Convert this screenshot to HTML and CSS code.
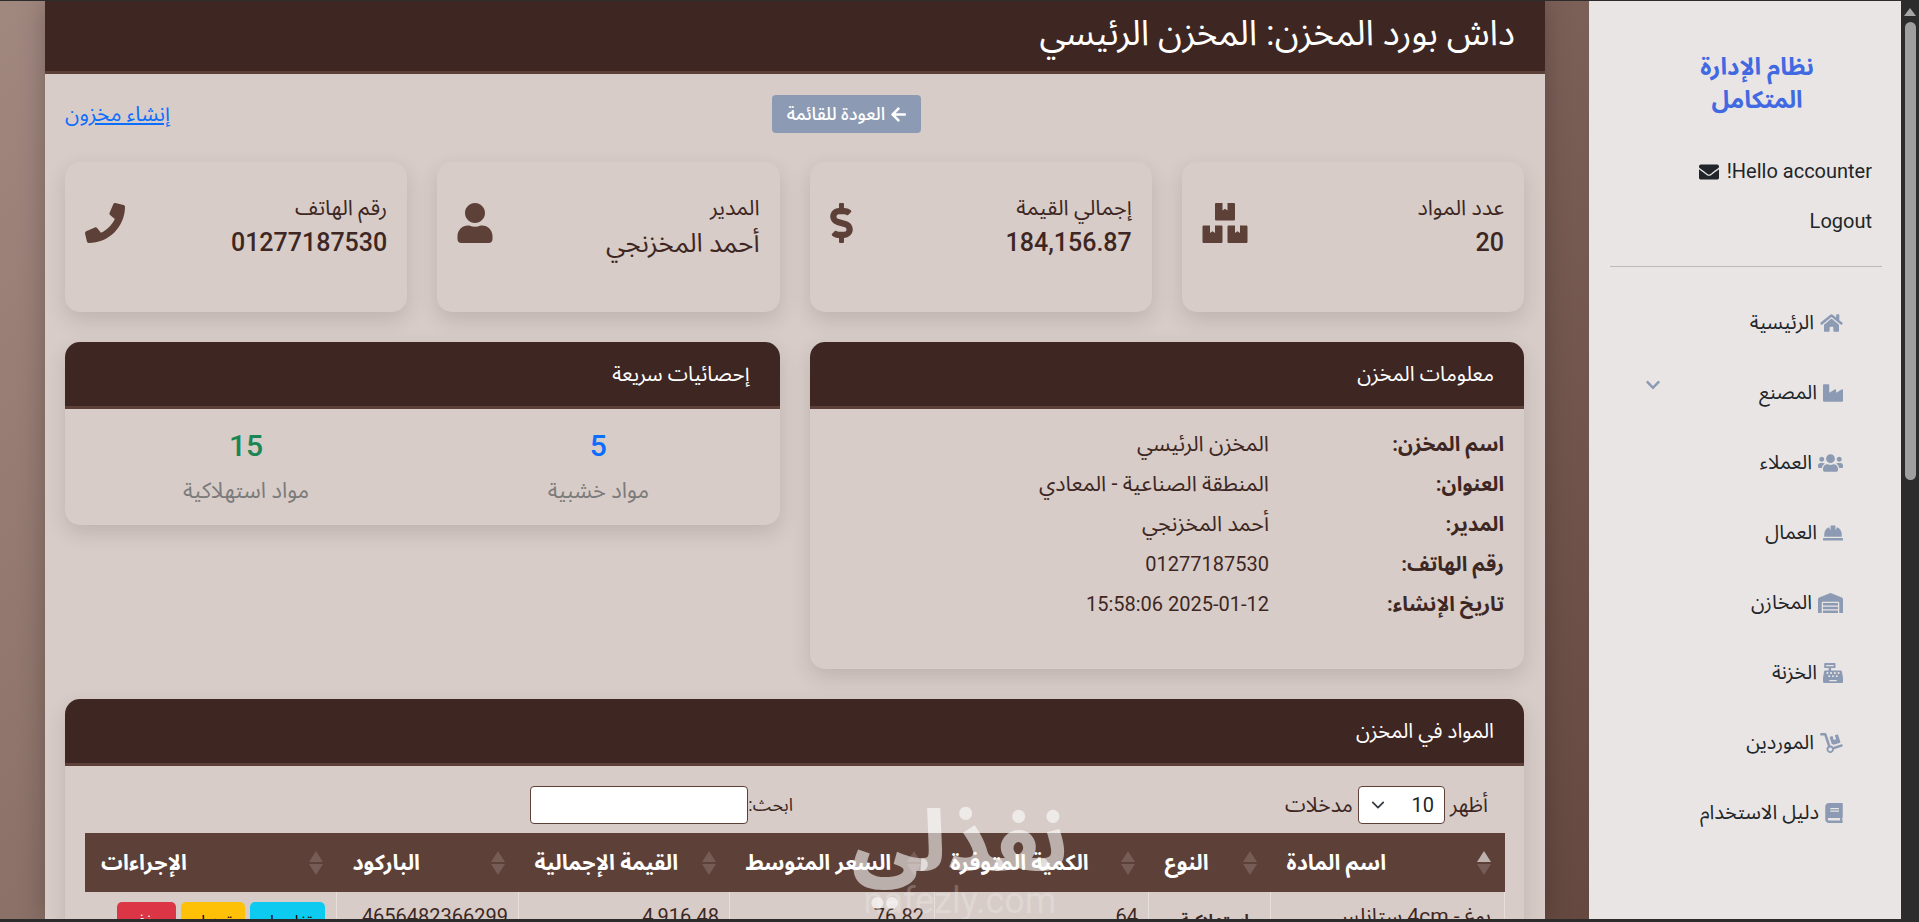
FILE: index.html
```html
<!DOCTYPE html>
<html lang="ar" dir="rtl">
<head>
<meta charset="utf-8">
<title>داش بورد المخزن</title>
<link rel="stylesheet" href="styles.css">
</head>
<body>
<svg class="sprite" aria-hidden="true">
<symbol id="i-phone" viewBox="0 0 512 512"><path d="M493.4 24.6l-104-24c-11.3-2.6-22.9 3.3-27.5 13.9l-48 112c-4.2 9.8-1.4 21.3 6.9 28l60.6 49.6c-36 76.7-98.9 140.5-177.2 177.2l-49.6-60.6c-6.8-8.3-18.2-11.1-28-6.9l-112 48C3.9 366.5-2 378.1.6 389.4l24 104C27.1 504.2 36.7 512 48 512c256.1 0 464-207.5 464-464 0-11.2-7.7-20.9-18.6-23.4z"/></symbol>
<symbol id="i-user" viewBox="0 0 448 512"><path d="M224 256c70.7 0 128-57.3 128-128S294.7 0 224 0 96 57.3 96 128s57.3 128 128 128zm89.6 32h-16.7c-22.2 10.2-46.9 16-72.9 16s-50.6-5.8-72.9-16h-16.7C60.2 288 0 348.2 0 422.4V464c0 26.5 21.5 48 48 48h352c26.5 0 48-21.5 48-48v-41.6c0-74.2-60.2-134.4-134.4-134.4z"/></symbol>
<symbol id="i-boxes" viewBox="0 0 576 512"><path d="M560 288h-80v96l-32-21.3-32 21.3v-96h-80c-8.8 0-16 7.2-16 16v192c0 8.8 7.2 16 16 16h224c8.8 0 16-7.2 16-16V304c0-8.8-7.2-16-16-16zm-384-64h224c8.8 0 16-7.2 16-16V16c0-8.8-7.2-16-16-16h-80v96l-32-21.3L256 96V0h-80c-8.8 0-16 7.2-16 16v192c0 8.8 7.2 16 16 16zm64 64h-80v96l-32-21.3L96 384v-96H16c-8.8 0-16 7.2-16 16v192c0 8.8 7.2 16 16 16h224c8.8 0 16-7.2 16-16V304c0-8.8-7.2-16-16-16z"/></symbol>
<symbol id="i-dollar" viewBox="0 0 288 512"><path d="M209.2 233.4l-108-31.6C88.7 198.2 80 186.5 80 173.5c0-16.3 13.2-29.5 29.5-29.5h66.3c12.2 0 24.2 3.7 34.2 10.5 6.1 4.1 14.3 3.1 19.5-2l34.8-34c7.1-6.9 6.1-18.4-1.8-24.5C238 74.8 207.4 64.1 176 64V16c0-8.8-7.2-16-16-16h-32c-8.8 0-16 7.2-16 16v48h-2.5C45.8 64-5.4 118.7.5 183.6c4.2 46.1 39.4 83.6 83.8 96.6l102.5 30c12.5 3.7 21.2 15.3 21.2 28.3 0 16.3-13.2 29.5-29.5 29.5h-66.3C100 368 88 364.3 78 357.5c-6.1-4.1-14.3-3.1-19.5 2l-34.8 34c-7.1 6.9-6.1 18.4 1.8 24.5 24.5 19.2 55.1 29.9 86.5 30v48c0 8.8 7.2 16 16 16h32c8.8 0 16-7.2 16-16v-48.2c46.6-.9 90.3-28.6 105.7-72.7 21.5-61.6-14.6-124.8-72.5-141.7z"/></symbol>
<symbol id="i-arrow" viewBox="0 0 448 512"><path d="M257.5 445.1l-22.2 22.2c-9.4 9.4-24.6 9.4-33.9 0L7 273c-9.4-9.4-9.4-24.6 0-33.9L201.4 44.7c9.4-9.4 24.6-9.4 33.9 0l22.2 22.2c9.5 9.5 9.3 25-.4 34.3L136.6 216H424c13.3 0 24 10.7 24 24v32c0 13.3-10.7 24-24 24H136.6l120.5 114.8c9.8 9.3 10 24.8.4 34.3z"/></symbol>
<symbol id="i-mail" viewBox="0 0 512 512"><path d="M502.3 190.8c3.9-3.1 9.7-.2 9.7 4.7V400c0 26.5-21.5 48-48 48H48c-26.5 0-48-21.5-48-48V195.6c0-5 5.7-7.8 9.7-4.7 22.4 17.4 52.1 39.5 154.1 113.6 21.1 15.4 56.7 47.8 92.2 47.6 35.7.3 72-32.8 92.3-47.6 102-74.1 131.6-96.3 154-113.7zM256 320c23.2.4 56.6-29.2 73.4-41.4 132.7-96.3 142.8-104.7 173.4-128.7 5.8-4.5 9.2-11.5 9.2-18.9v-19c0-26.5-21.5-48-48-48H48C21.5 64 0 85.5 0 112v19c0 7.4 3.4 14.3 9.2 18.9 30.6 23.9 40.7 32.4 173.4 128.7 16.8 12.2 50.2 41.8 73.4 41.4z"/></symbol>
<symbol id="i-home" viewBox="0 0 576 512"><path d="M280.37 148.26L96 300.11V464a16 16 0 0 0 16 16l112.06-.29a16 16 0 0 0 15.92-16V368a16 16 0 0 1 16-16h64a16 16 0 0 1 16 16v95.64a16 16 0 0 0 16 16.05L464 480a16 16 0 0 0 16-16V300L295.67 148.26a12.19 12.19 0 0 0-15.3 0zM571.6 251.47L488 182.56V44.05a12 12 0 0 0-12-12h-56a12 12 0 0 0-12 12v72.61L318.47 43a48 48 0 0 0-61 0L4.34 251.47a12 12 0 0 0-1.6 16.9l25.5 31A12 12 0 0 0 45.15 301l235.22-193.74a12.19 12.19 0 0 1 15.3 0L530.9 301a12 12 0 0 0 16.9-1.6l25.5-31a12 12 0 0 0-1.7-16.93z"/></symbol>
<symbol id="i-industry" viewBox="0 0 512 512"><path d="M475.115 163.781L336 252.309v-68.28c0-18.916-20.931-30.399-36.885-20.248L160 252.309V56c0-13.255-10.745-24-24-24H24C10.745 32 0 42.745 0 56v400c0 13.255 10.745 24 24 24h464c13.255 0 24-10.745 24-24V184.029c0-18.917-20.931-30.399-36.885-20.248z"/></symbol>
<symbol id="i-users" viewBox="0 0 640 512"><path d="M96 224c35.3 0 64-28.7 64-64s-28.7-64-64-64-64 28.7-64 64 28.7 64 64 64zm448 0c35.3 0 64-28.7 64-64s-28.7-64-64-64-64 28.7-64 64 28.7 64 64 64zm32 32h-64c-17.6 0-33.5 7.1-45.1 18.6 40.3 22.1 68.9 62 75.1 109.4h66c17.7 0 32-14.3 32-32v-32c0-35.3-28.7-64-64-64zm-256 0c61.9 0 112-50.1 112-112S381.9 32 320 32 208 82.1 208 144s50.1 112 112 112zm76.8 32h-8.3c-20.8 10-43.9 16-68.5 16s-47.6-6-68.5-16h-8.3C179.6 288 128 339.6 128 403.2V432c0 26.5 21.5 48 48 48h288c26.5 0 48-21.5 48-48v-28.8c0-63.6-51.6-115.2-115.2-115.2zm-223.7-13.4C161.5 263.1 145.6 256 128 256H64c-35.3 0-64 28.7-64 64v32c0 17.7 14.3 32 32 32h65.9c6.3-47.4 34.9-87.3 75.2-109.4z"/></symbol>
<symbol id="i-hat" viewBox="0 0 512 512"><path d="M480 288c0-80.25-49.28-148.92-119.19-177.62L320 192V80a16 16 0 0 0-16-16h-96a16 16 0 0 0-16 16v112l-40.81-81.62C81.28 139.08 32 207.75 32 288v64h448zm16 96H16a16 16 0 0 0-16 16v32a16 16 0 0 0 16 16h480a16 16 0 0 0 16-16v-32a16 16 0 0 0-16-16z"/></symbol>
<symbol id="i-warehouse" viewBox="0 0 640 512"><path d="M504 352H136.4c-4.4 0-8 3.6-8 8l-.1 48c0 4.4 3.6 8 8 8H504c4.4 0 8-3.6 8-8v-48c0-4.4-3.6-8-8-8zm0 96H136.1c-4.4 0-8 3.6-8 8l-.1 48c0 4.4 3.6 8 8 8h368c4.4 0 8-3.6 8-8v-48c0-4.4-3.6-8-8-8zm0-192H136.6c-4.4 0-8 3.6-8 8l-.1 48c0 4.4 3.6 8 8 8H504c4.4 0 8-3.6 8-8v-48c0-4.4-3.6-8-8-8zm106.5-139L338.4 3.7a48.15 48.15 0 0 0-36.9 0L29.5 117C11.7 124.5 0 141.9 0 161.3V504c0 4.4 3.6 8 8 8h80c4.4 0 8-3.6 8-8V256c0-17.6 14.6-32 32.6-32h382.8c18 0 32.6 14.4 32.6 32v248c0 4.4 3.6 8 8 8h80c4.4 0 8-3.6 8-8V161.3c0-19.4-11.7-36.8-29.5-44.3z"/></symbol>
<symbol id="i-cash" viewBox="0 0 512 512"><path d="M511.1 378.8l-26.7-160c-2.6-15.4-15.9-26.7-31.6-26.7H208v-64h96c8.8 0 16-7.2 16-16V16c0-8.8-7.2-16-16-16H48c-8.8 0-16 7.2-16 16v96c0 8.8 7.2 16 16 16h96v64H59.1c-15.6 0-29 11.3-31.6 26.7L.8 378.7c-.6 3.5-.9 7-.9 10.5V480c0 17.7 14.3 32 32 32h448c17.7 0 32-14.3 32-32v-90.7c.1-3.5-.2-7-.8-10.5zM280 248c0-8.8 7.2-16 16-16h16c8.8 0 16 7.2 16 16v16c0 8.8-7.2 16-16 16h-16c-8.8 0-16-7.2-16-16v-16zm-32 64h16c8.8 0 16 7.2 16 16v16c0 8.8-7.2 16-16 16h-16c-8.8 0-16-7.2-16-16v-16c0-8.8 7.2-16 16-16zm-32-80c8.8 0 16 7.2 16 16v16c0 8.8-7.2 16-16 16h-16c-8.8 0-16-7.2-16-16v-16c0-8.8 7.2-16 16-16h16zM80 80V48h192v32H80zm40 200h-16c-8.8 0-16-7.2-16-16v-16c0-8.8 7.2-16 16-16h16c8.8 0 16 7.2 16 16v16c0 8.8-7.2 16-16 16zm16 64v-16c0-8.8 7.2-16 16-16h16c8.8 0 16 7.2 16 16v16c0 8.8-7.2 16-16 16h-16c-8.8 0-16-7.2-16-16zm216 112c0 4.4-3.6 8-8 8H168c-4.4 0-8-3.6-8-8v-16c0-4.4 3.6-8 8-8h176c4.4 0 8 3.6 8 8v16zm24-112c0 8.8-7.2 16-16 16h-16c-8.8 0-16-7.2-16-16v-16c0-8.8 7.2-16 16-16h16c8.8 0 16 7.2 16 16v16zm48-80c0 8.8-7.2 16-16 16h-16c-8.8 0-16-7.2-16-16v-16c0-8.8 7.2-16 16-16h16c8.8 0 16 7.2 16 16v16z"/></symbol>
<symbol id="i-dolly" viewBox="0 0 576 512"><path d="M294.2 277.7c18 5 34.7 13.4 49.5 24.7l161.5-53.8c8.4-2.8 12.9-11.9 10.1-20.2L454.9 47.2c-2.8-8.4-11.9-12.9-20.2-10.1l-61.1 20.4 33.1 99.4L346 177l-33.1-99.4-61.6 20.5c-8.4 2.8-12.9 11.9-10.1 20.2l53 159.4zm281 48.7L565 296c-2.8-8.4-11.9-12.9-20.2-10.1l-213.5 71.2c-17.2-22-43.6-36.4-73.5-37L158.4 21.9C154 8.8 141.8 0 128 0H16C7.2 0 0 7.2 0 16v32c0 8.8 7.2 16 16 16h88.9l92.2 276.7c-26.1 20.4-41.7 53.6-36 90.5 6.1 39.4 37.9 72.3 77.3 79.2 60.2 10.7 112.3-34.8 113.4-92.6l213.3-71.2c8.3-2.8 12.9-11.8 10.1-20.2zM256 464c-26.5 0-48-21.5-48-48s21.5-48 48-48 48 21.5 48 48-21.5 48-48 48z"/></symbol>
<symbol id="i-book" viewBox="0 0 448 512"><path d="M448 360V24c0-13.3-10.7-24-24-24H96C43 0 0 43 0 96v320c0 53 43 96 96 96h328c13.3 0 24-10.7 24-24v-16c0-7.5-3.5-14.3-8.9-18.7-4.2-15.4-4.2-59.3 0-74.7 5.4-4.3 8.9-11.1 8.9-18.6zM128 134c0-3.3 2.7-6 6-6h212c3.3 0 6 2.7 6 6v20c0 3.3-2.7 6-6 6H134c-3.3 0-6-2.7-6-6v-20zm0 64c0-3.3 2.7-6 6-6h212c3.3 0 6 2.7 6 6v20c0 3.3-2.7 6-6 6H134c-3.3 0-6-2.7-6-6v-20zm253.4 250H96c-17.7 0-32-14.3-32-32 0-17.6 14.4-32 32-32h285.4c-1.9 17.1-1.9 46.9 0 64z"/></symbol>
<symbol id="i-chev" viewBox="0 0 448 512"><path d="M207.029 381.476L12.686 187.132c-9.373-9.373-9.373-24.569 0-33.941l22.667-22.667c9.357-9.357 24.522-9.375 33.901-.04L224 284.505l154.745-154.021c9.379-9.335 24.544-9.317 33.901.04l22.667 22.667c9.373 9.373 9.373 24.569 0 33.941L240.971 381.476c-9.373 9.372-24.569 9.372-33.942 0z"/></symbol>
</svg>

<div class="window">
  <div class="scrollbar"><span class="scroll-arrow"></span><span class="scroll-thumb"></span></div>

  <aside class="sidebar">
    <h2 class="brand">نظام الإدارة<br>المتكامل</h2>
    <div class="hello"><span>Hello accounter!</span><svg class="hello-icon"><use href="#i-mail"/></svg></div>
    <div class="logout">Logout</div>
    <hr class="side-rule">
    <nav class="nav">
      <a class="nav-item"><svg class="nav-icon w21"><use href="#i-home"/></svg>الرئيسية</a>
      <a class="nav-item nav-item-sub"><svg class="nav-icon w20"><use href="#i-industry"/></svg>المصنع<svg class="nav-chev"><use href="#i-chev"/></svg></a>
      <a class="nav-item"><svg class="nav-icon w25"><use href="#i-users"/></svg>العملاء</a>
      <a class="nav-item"><svg class="nav-icon w20"><use href="#i-hat"/></svg>العمال</a>
      <a class="nav-item"><svg class="nav-icon w25"><use href="#i-warehouse"/></svg>المخازن</a>
      <a class="nav-item"><svg class="nav-icon w20"><use href="#i-cash"/></svg>الخزنة</a>
      <a class="nav-item"><svg class="nav-icon w23"><use href="#i-dolly"/></svg>الموردين</a>
      <a class="nav-item"><svg class="nav-icon w18"><use href="#i-book"/></svg>دليل الاستخدام</a>
    </nav>
  </aside>

  <main class="main">
    <header class="page-head"><h1 class="page-title">داش بورد المخزن: المخزن الرئيسي</h1></header>
    <div class="page-body">
      <div class="toolbar">
        <span class="toolbar-side"></span>
        <a class="btn-back"><svg class="btn-back-icon"><use href="#i-arrow"/></svg>العودة للقائمة</a>
        <a class="create-link">إنشاء مخزون</a>
      </div>

      <section class="stat-row">
        <div class="stat-card">
          <div class="stat-text"><div class="stat-label">عدد المواد</div><div class="stat-value">20</div></div>
          <svg class="stat-icon si-boxes"><use href="#i-boxes"/></svg>
        </div>
        <div class="stat-card">
          <div class="stat-text"><div class="stat-label">إجمالي القيمة</div><div class="stat-value">184,156.87</div></div>
          <svg class="stat-icon si-dollar"><use href="#i-dollar"/></svg>
        </div>
        <div class="stat-card">
          <div class="stat-text"><div class="stat-label">المدير</div><div class="stat-value stat-value-name">أحمد المخزنجي</div></div>
          <svg class="stat-icon si-user"><use href="#i-user"/></svg>
        </div>
        <div class="stat-card">
          <div class="stat-text"><div class="stat-label">رقم الهاتف</div><div class="stat-value">01277187530</div></div>
          <svg class="stat-icon si-phone"><use href="#i-phone"/></svg>
        </div>
      </section>

      <section class="two-col">
        <div class="panel panel-info">
          <div class="panel-head">معلومات المخزن</div>
          <dl class="info-list">
            <dt>اسم المخزن:</dt><dd>المخزن الرئيسي</dd>
            <dt>العنوان:</dt><dd>المنطقة الصناعية - المعادي</dd>
            <dt>المدير:</dt><dd>أحمد المخزنجي</dd>
            <dt>رقم الهاتف:</dt><dd class="dd-num">01277187530</dd>
            <dt>تاريخ الإنشاء:</dt><dd class="dd-num">2025-01-12 15:58:06</dd>
          </dl>
        </div>
        <div class="panel panel-quick">
          <div class="panel-head">إحصائيات سريعة</div>
          <div class="quick-grid">
            <div class="quick"><div class="quick-num num-blue">5</div><div class="quick-label">مواد خشبية</div></div>
            <div class="quick"><div class="quick-num num-green">15</div><div class="quick-label">مواد استهلاكية</div></div>
          </div>
        </div>
      </section>

      <section class="panel panel-table">
        <div class="panel-head">المواد في المخزن</div>
        <div class="table-body">
          <div class="dt-controls">
            <label class="dt-length">أظهر <span class="fake-select"><span>10</span><svg class="select-chev" viewBox="0 0 16 16"><path d="M2 5l6 6 6-6" fill="none" stroke="#343a40" stroke-width="2" stroke-linecap="round" stroke-linejoin="round"/></svg></span> مدخلات</label>
            <label class="dt-search">ابحث:<span class="fake-input"></span></label>
          </div>
          <table class="dt">
            <thead>
              <tr>
                <th class="c1 sorted">اسم المادة</th>
                <th class="c2">النوع</th>
                <th class="c3">الكمية المتوفرة</th>
                <th class="c4">السعر المتوسط</th>
                <th class="c5">القيمة الإجمالية</th>
                <th class="c6">الباركود</th>
                <th class="c7">الإجراءات</th>
              </tr>
            </thead>
            <tbody>
              <tr>
                <td class="td-name">بوغ - 4cm ستانلس</td>
                <td class="td-type">استهلاكية</td>
                <td>64</td>
                <td>76.82</td>
                <td>4,916.48</td>
                <td>4656482366299</td>
                <td class="td-act"><a class="act act-info">تفاصيل</a><a class="act act-warn">تعديل</a><a class="act act-del">حذف</a></td>
              </tr>
            </tbody>
          </table>
        </div>
      </section>
    </div>
  </main>

  <div class="watermark" aria-hidden="true"><div class="wm-ar">نفذلي</div><div class="wm-en">nafezly.com</div></div>
</div>
</body>
</html>
```

FILE: styles.css
```css
* { box-sizing: border-box; }
html, body { margin: 0; height: 100%; overflow: hidden; }
body {
  background: #2c2c2c;
  font-family: Roboto, "Noto Sans Arabic", "Noto Kufi Arabic", "DejaVu Sans", sans-serif;
  color: #3e2723;
  font-size: 16px;
  padding: 1px 0 3px;
}
.sprite { display: none; }
svg { fill: currentColor; }

.window {
  position: relative;
  height: 100%;
  display: flex;
  background: linear-gradient(135deg, #a1887f 0%, #5d4037 100%);
  overflow: hidden;
}
.scrollbar {
  flex: 0 0 18px;
  background: #2c2c2c;
  display: flex;
  flex-direction: column;
  align-items: center;
  padding-top: 7px;
  gap: 6px;
}
.scroll-arrow {
  width: 0; height: 0;
  border-left: 6px solid transparent;
  border-right: 6px solid transparent;
  border-bottom: 8px solid #a6a6a6;
}
.scroll-thumb { width: 11px; height: 458px; background: #9f9f9f; border-radius: 6px; }

.sidebar {
  flex: 0 0 312px;
  background: #e9e5e4;
  padding: 0 19px 0 21px;
  color: #212529;
}
.brand {
  margin: 50px 0 0;
  color: #4169e1;
  font-size: 24px;
  font-weight: 700;
  line-height: 33px;
  text-align: center;
  padding-left: 22px;
}
.hello {
  margin-top: 41px;
  display: flex;
  justify-content: flex-start;
  align-items: center;
  gap: 8px;
  font-size: 20px;
  line-height: 27px;
  padding-right: 10px;
}
.hello-icon { width: 20px; height: 20px; }
.logout { margin-top: 23px; font-size: 20px; line-height: 27px; padding-right: 10px; }
.side-rule { margin: 31px 0 0; border: 0; border-top: 1px solid #bdb9b8; }
.nav { margin-top: 21px; }
.nav-item {
  height: 70px;
  display: flex;
  align-items: center;
  gap: 6px;
  padding-right: 39px;
  font-size: 20px;
  color: #212529;
  position: relative;
}
.nav-icon { color: #8c9bb3; height: 20px; flex: none; }
.w18 { width: 18px; } .w20 { width: 20px; } .w21 { width: 23px; } .w23 { width: 23px; } .w25 { width: 25px; }
.nav-item-sub { margin: 0; }
.nav-chev { position: absolute; left: 35px; top: 19px; width: 16px; height: 16px; color: #8c9bb3; }

.main {
  flex: 0 0 1500px;
  margin-right: 44px;
  background: #d7ccc8;
  box-shadow: 0 0 24px rgba(0,0,0,.25);
  min-width: 0;
}
.page-head {
  height: 73px;
  background: #3e2723;
  border-bottom: 3px solid #5d4037;
  padding: 0 30px;
  display: flex;
  align-items: center;
}
.page-title { margin: 0 0 6px; color: #fff; font-size: 35.5px; font-weight: 400; }

.page-body { padding: 20px 21px 0 20px; }
.toolbar { display: flex; align-items: center; justify-content: space-between; height: 40px; }
.btn-back {
  height: 38px;
  width: 149px;
  background: #8c9bb3;
  color: #fff;
  border-radius: 4px;
  display: flex;
  align-items: center;
  justify-content: center;
  gap: 5px;
  font-size: 18px;
  font-weight: 500;
}
.btn-back-icon { width: 17px; height: 17px; }
.create-link { color: #0d6efd; text-decoration: underline; font-size: 21px; }

.stat-row { display: grid; grid-template-columns: repeat(4, 1fr); gap: 30px; margin-top: 28px; }
.stat-card {
  height: 150px;
  background: #d7ccc8;
  border-radius: 15px;
  box-shadow: 0 8px 20px rgba(62,39,35,.15);
  padding: 32px 20px 0;
  display: flex;
  justify-content: space-between;
}
.stat-text { text-align: right; }
.stat-label { font-size: 21.5px; line-height: 27px; color: #3e2723; }
.stat-value { font-size: 25px; font-weight: 500; line-height: 36px; margin-top: 4px; }
.stat-value-name { font-weight: 400; font-size: 26px; }
.stat-icon { height: 40px; margin-top: 9px; color: #5d4037; flex: none; }
.si-boxes { width: 46px; } .si-dollar { width: 23px; } .si-user { width: 36px; } .si-phone { width: 40px; }

.two-col { display: grid; grid-template-columns: 1fr 1fr; gap: 30px; margin-top: 30px; align-items: start; }
.panel {
  background: #d7ccc8;
  border-radius: 15px;
  box-shadow: 0 8px 20px rgba(62,39,35,.15);
  overflow: hidden;
}
.panel-head {
  height: 67px;
  background: #3e2723;
  border-bottom: 3px solid #5d4037;
  color: #fff;
  font-size: 20.5px;
  font-weight: 400;
  padding: 0 30px;
  display: flex;
  align-items: center;
}
.panel-info { height: 327px; }
.panel-quick { height: 183px; }
.info-list {
  margin: 0;
  padding: 15px 20px 0;
  display: grid;
  grid-template-columns: 235px 1fr;
  grid-auto-rows: 40px;
  align-items: center;
  font-size: 21.5px;
}
.info-list dt { font-weight: 700; font-size: 20.5px; }
.info-list dd { margin: 0; }
.info-list .dd-num { font-size: 20px; }
.quick-grid { display: grid; grid-template-columns: 1fr 1fr; padding: 13px 5px 0; text-align: center; }
.quick-num { font-size: 30px; font-weight: 500; line-height: 48px; }
.num-blue { color: #0d6efd; }
.num-green { color: #198754; }
.quick-label { font-size: 22px; line-height: 27px; color: #7b7b7b; margin-top: 7px; }

.panel-table { margin-top: 30px; height: 300px; }
.table-body { padding: 20px 19px 0 20px; }
.dt-controls { display: grid; grid-template-columns: 1fr 1fr; height: 38px; font-size: 21px; line-height: 1; color: #3e2723; }
.dt-length, .dt-search { display: flex; align-items: center; gap: 5px; padding-right: 17px; height: 38px; }
.dt-search { padding-right: 2px; gap: 0; font-size: 18px; }
.fake-select {
  width: 87px; height: 38px; background: #fff;
  border: 1px solid #5d4037; border-radius: 4px;
  display: flex; align-items: center; justify-content: space-between;
  padding: 0 10px 0 12px;
  font-size: 20px; color: #212529;
}
.select-chev { width: 14px; height: 14px; fill: none; }
.fake-input { width: 218px; height: 38px; background: #fff; border: 1px solid #5d4037; border-radius: 4px; }

.dt { width: 100%; margin-top: 9px; border-collapse: collapse; table-layout: fixed; font-size: 20px; }
.dt th {
  height: 59px; background: #5d4037; color: #fff;
  font-size: 21.5px; font-weight: 700;
  text-align: left; padding: 0 15px 0 16px;
  position: relative;
  white-space: nowrap;
}
.dt th::before, .dt th::after {
  content: ""; position: absolute; right: 14px;
  border-left: 7px solid transparent; border-right: 7px solid transparent;
}
.dt th::before { top: 18px; border-bottom: 11px solid rgba(255,255,255,.15); }
.dt th::after { top: 31px; border-top: 11px solid rgba(255,255,255,.15); }
.dt th.sorted::before { border-bottom-color: rgba(255,255,255,.6); }
.c1 { width: 234px; } .c2 { width: 122px; } .c3 { width: 214px; } .c4 { width: 205px; }
.c5 { width: 211px; } .c6 { width: 182px; } .c7 { width: 252px; }
.dt td {
  padding: 12px 10px 0;
  vertical-align: top;
  border-left: 1px solid #e6dfdc;
  text-align: right;
  white-space: nowrap;
  color: #3e2723;
  line-height: 24px;
}
.dt td:last-child { border-left: 0; padding: 10px 11px 0 0; }
.dt td.td-name { border-right: 1px solid #e6dfdc; padding-right: 13px; font-size: 21px; }
.dt td.td-type { padding: 17px 21px 0 0; font-size: 16px; font-weight: 700; }
.act { display: inline-block; height: 38px; line-height: 38px; border-radius: 5px; text-align: center; margin-left: 5px; font-size: 16px; color: #000; }
.act-info { width: 75px; background: #0dcaf0; }
.act-warn { width: 64px; background: #ffc107; }
.act-del { width: 59px; background: #dc3545; color: #fff; margin-left: 0; }

.watermark {
  position: absolute;
  left: 840px;
  top: 792px;
  width: 240px;
  text-align: center;
  color: rgba(255,255,255,.58);
  pointer-events: none;
}
.wm-ar { font-size: 84px; font-weight: 800; line-height: 100px; }
.wm-en { font-size: 36px; line-height: 36px; font-weight: 400; color: rgba(255,255,255,.22); margin-top: -10px; }
```
